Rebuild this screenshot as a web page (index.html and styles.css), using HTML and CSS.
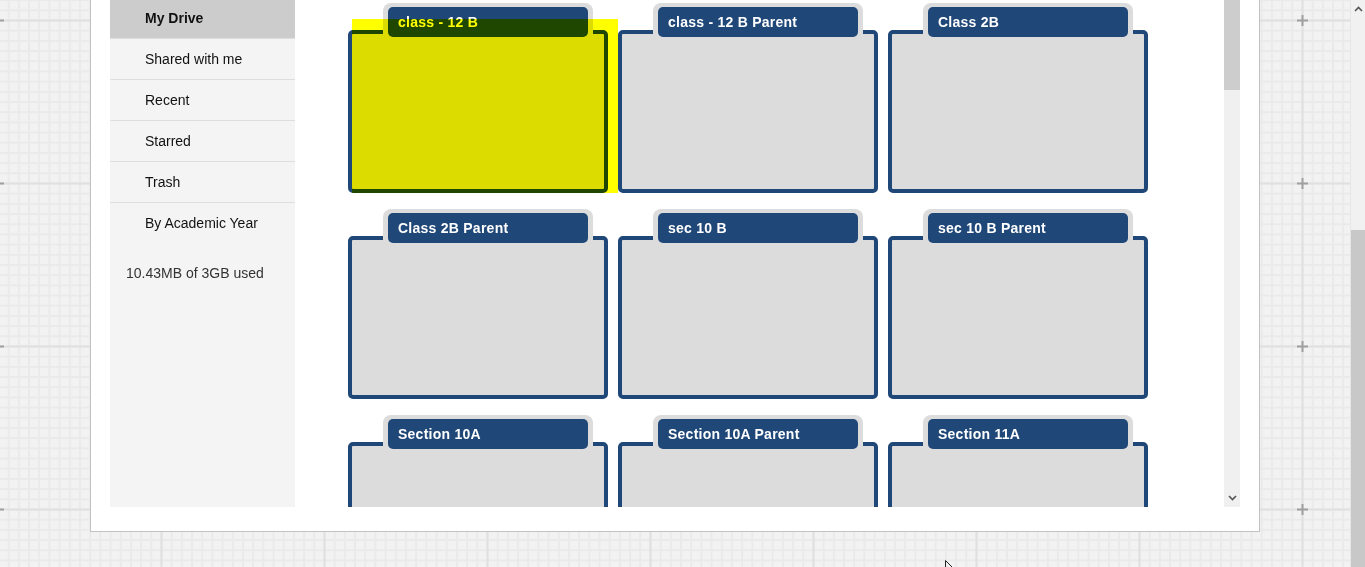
FILE: index.html
```html
<!DOCTYPE html>
<html lang="en">
<head>
<meta charset="utf-8">
<title>My Drive</title>
<link rel="stylesheet" href="styles.css">
</head>
<body>
<div class="canvas">
  <svg class="grid-bg" width="100%" height="100%" aria-hidden="true">
    <defs>
      <pattern id="minor" patternUnits="userSpaceOnUse" x="160.5" y="19.5" width="10.1875" height="10.1875">
        <rect x="0" y="0" width="2" height="10.1875" fill="#eaeaea"/>
        <rect x="0" y="0" width="10.1875" height="2" fill="#eaeaea"/>
      </pattern>
      <pattern id="major" patternUnits="userSpaceOnUse" x="80" y="-61" width="163" height="163">
        <rect x="80.5" y="0" width="2" height="163" fill="#e0e0e0"/>
        <rect x="0" y="80.5" width="163" height="2" fill="#e0e0e0"/>
        <rect x="76" y="80.5" width="11" height="2" fill="#a0a0a0"/>
        <rect x="80.5" y="76" width="2" height="11" fill="#a0a0a0"/>
      </pattern>
    </defs>
    <rect width="100%" height="100%" fill="#f2f2f2"/>
    <rect width="100%" height="100%" fill="url(#minor)"/>
    <rect width="100%" height="100%" fill="url(#major)"/>
  </svg>

  <div class="panel">
    <aside class="sidebar">
      <ul class="nav">
        <li class="nav-item active">My Drive</li>
        <li class="nav-item">Shared with me</li>
        <li class="nav-item">Recent</li>
        <li class="nav-item">Starred</li>
        <li class="nav-item">Trash</li>
        <li class="nav-item last">By Academic Year</li>
      </ul>
      <p class="storage">10.43MB of 3GB used</p>
    </aside>

    <main class="content">
      <div class="folders">
        <div class="folder">
          <div class="tab"><div class="tab-label">class - 12 B</div></div>
          <div class="folder-body"></div>
          <div class="highlight"></div>
        </div>
        <div class="folder">
          <div class="tab"><div class="tab-label">class - 12 B Parent</div></div>
          <div class="folder-body"></div>
        </div>
        <div class="folder">
          <div class="tab"><div class="tab-label">Class 2B</div></div>
          <div class="folder-body"></div>
        </div>
        <div class="folder">
          <div class="tab"><div class="tab-label">Class 2B Parent</div></div>
          <div class="folder-body"></div>
        </div>
        <div class="folder">
          <div class="tab"><div class="tab-label">sec 10 B</div></div>
          <div class="folder-body"></div>
        </div>
        <div class="folder">
          <div class="tab"><div class="tab-label">sec 10 B Parent</div></div>
          <div class="folder-body"></div>
        </div>
        <div class="folder">
          <div class="tab"><div class="tab-label">Section 10A</div></div>
          <div class="folder-body"></div>
        </div>
        <div class="folder">
          <div class="tab"><div class="tab-label">Section 10A Parent</div></div>
          <div class="folder-body"></div>
        </div>
        <div class="folder">
          <div class="tab"><div class="tab-label">Section 11A</div></div>
          <div class="folder-body"></div>
        </div>
      </div>
      <div class="inner-scroll">
        <div class="inner-thumb"></div>
        <div class="inner-track"></div>
        <svg class="chev" width="9" height="6" viewBox="0 0 9 6"><polyline points="1,1 4.5,4.5 8,1" fill="none" stroke="#555" stroke-width="1.6"/></svg>
      </div>
    </main>
  </div>

  <svg class="cursor" width="12" height="8" viewBox="0 0 12 8" aria-hidden="true"><path d="M0.5 0.5 L0.5 8 M0.5 0.5 L7 7" fill="none" stroke="#222" stroke-width="1"/></svg>
</div>

<div class="page-scroll">
  <svg class="chev-up" width="9" height="6" viewBox="0 0 9 6"><polyline points="1,5 4.5,1.5 8,5" fill="none" stroke="#555" stroke-width="1.6"/></svg>
  <div class="page-thumb"></div>
</div>
</body>
</html>
```

FILE: styles.css
```css
* { box-sizing: border-box; }

html, body {
  margin: 0;
  padding: 0;
  height: 567px;
  overflow: hidden;
}

body {
  display: flex;
  font-family: "Liberation Sans", Arial, sans-serif;
  font-size: 14px;
  color: #222;
}

.canvas {
  flex: 1;
  position: relative;
  isolation: isolate;
  padding-left: 90px;
}

.grid-bg {
  position: absolute;
  left: 0;
  top: 0;
  z-index: -1;
}

.panel {
  width: 1170px;
  height: 532px;
  background: #fff;
  border: 1px solid #c2c2c2;
  border-top: none;
  padding: 0 19px 24px 19px;
  display: flex;
}

/* Sidebar */
.sidebar {
  width: 185px;
  flex: none;
  background: #f4f4f4;
  overflow: hidden;
}

.nav {
  list-style: none;
  margin: -2px 0 0 0;
  padding: 0;
}

.nav-item {
  height: 41px;
  line-height: 40px;
  padding-left: 35px;
  border-bottom: 1px solid #dedede;
  color: #111;
}

.nav-item.active {
  background: #cccccc;
  font-weight: bold;
  color: #111;
}

.nav-item.last {
  border-bottom: none;
  height: 40px;
}

.storage {
  margin: 20px 0 0 0;
  padding-left: 16px;
  line-height: 20px;
  color: #333;
}

/* Content */
.content {
  flex: 1;
  display: flex;
  overflow: hidden;
}

.folders {
  flex: 1;
  overflow: hidden;
  padding: 3px 0 0 53px;
  display: grid;
  grid-template-columns: repeat(3, 260px);
  grid-auto-rows: 190px;
  column-gap: 10px;
  row-gap: 16px;
  align-content: start;
}

.folder {
  position: relative;
  width: 260px;
}

.tab {
  position: relative;
  z-index: 1;
  margin-left: 35px;
  width: 210px;
  height: 35px;
  padding: 4px 5px 0 5px;
  margin-bottom: -8px;
  background: #dcdcdc;
  border-radius: 8px 8px 0 0;
}

.tab-label {
  height: 30px;
  line-height: 30px;
  padding-left: 10px;
  background: #1f4778;
  border-radius: 5px;
  color: #fff;
  font-weight: bold;
  font-size: 14px;
  letter-spacing: 0.25px;
  white-space: nowrap;
}

.folder-body {
  height: 163px;
  background: #dcdcdc;
  border: 4px solid #1f4778;
  border-radius: 5px;
}

.highlight {
  position: absolute;
  z-index: 2;
  left: 4px;
  top: 16px;
  width: 266px;
  height: 174px;
  background: #ffff00;
  mix-blend-mode: multiply;
}

/* Inner scrollbar */
.inner-scroll {
  width: 16px;
  flex: none;
  display: flex;
  flex-direction: column;
  align-items: center;
  background: #f0f0f0;
}

.inner-thumb {
  width: 100%;
  height: 90px;
  background: #cdcdcd;
}

.inner-track {
  flex: 1;
}

.chev {
  margin-bottom: 6px;
}

/* Page scrollbar */
.page-scroll {
  width: 15px;
  flex: none;
  background: #f1f1f1;
  display: flex;
  flex-direction: column;
  align-items: center;
  border-left: 1px solid #e6e6e6;
}

.chev-up {
  margin-top: 6px;
}

.page-thumb {
  margin-top: 218px;
  width: 100%;
  flex: 1;
  background: #c8c8c8;
}

.cursor {
  position: absolute;
  left: 945px;
  top: 560px;
}
```
